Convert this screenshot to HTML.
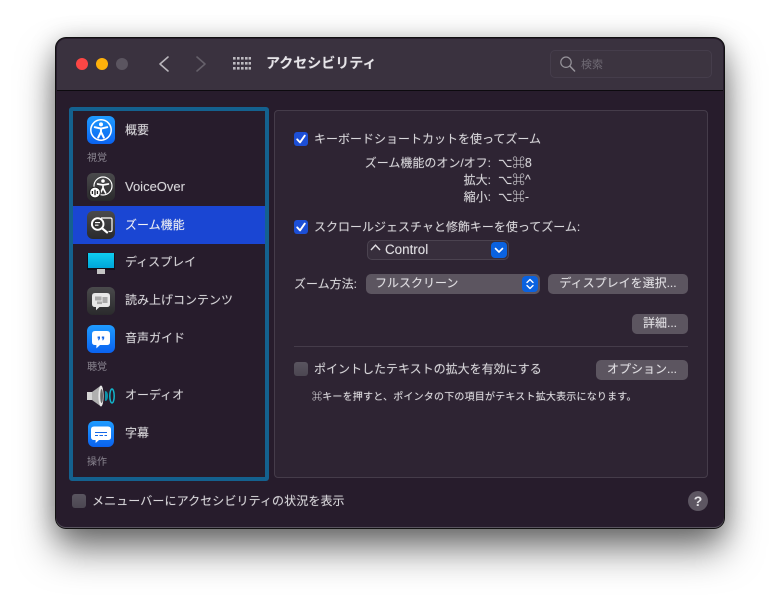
<!DOCTYPE html>
<html lang="ja"><head><meta charset="utf-8">
<style>
html,body{margin:0;padding:0;background:#fff}
body{width:780px;height:602px;position:relative;overflow:hidden;font-family:"Liberation Sans","Noto Sans CJK JP",sans-serif;font-size:12px;color:#d8d6da}
.a{position:absolute}
.t{position:absolute;white-space:nowrap;line-height:16px;height:16px;text-shadow:0 0 1px rgba(216,214,218,.35)}
#win{position:absolute;left:56px;top:38px;width:668px;height:490px;background:#271c2c;border-radius:10px;box-shadow:inset 0 -1px 0 #5a5560,0 0 0 1px #111,0 22px 38px rgba(0,0,0,.5),0 4px 26px rgba(0,0,0,.28);overflow:hidden}
.cb{position:absolute;width:14px;height:14px;border-radius:3px;background:#1c4fd6}
.cb.off{background:linear-gradient(#5a5560,#4c4752)}
.cb svg{position:absolute;left:0;top:0}
.btn{position:absolute;height:20px;line-height:19px;border-radius:5px;background:#5c5560;text-align:center;color:#e2e0e4;white-space:nowrap;text-shadow:0 0 1px rgba(226,224,228,.35)}
.ic{position:absolute;left:87px;width:28px;height:28px;border-radius:6px}
.blue{background:linear-gradient(#1f9bff,#0a62f0)}
.dark{background:linear-gradient(#4a4a4c,#2a2a2c)}
.ic svg{position:absolute;left:0;top:0}
.sec{position:absolute;left:87px;font-size:10px;color:#8a8590;line-height:14px}
</style></head><body>
<div id="win"></div>
<div class="a" style="left:57px;top:39px;width:666px;height:51px;background:#3a323f;border-radius:9px 9px 0 0"></div>
<div class="a" style="left:57px;top:90px;width:666px;height:1px;background:#0c0a0e"></div>

<div class="a" style="left:76px;top:58px;width:12px;height:12px;border-radius:50%;background:#fc4645"></div>
<div class="a" style="left:96px;top:58px;width:12px;height:12px;border-radius:50%;background:#fdb10b"></div>
<div class="a" style="left:116px;top:58px;width:12px;height:12px;border-radius:50%;background:#5b5560"></div>

<svg class="a" style="left:155px;top:54px" width="56" height="20" fill="none" stroke-width="1.6" stroke-linecap="round" stroke-linejoin="round"><path d="M13 3 L5 10 L13 17" stroke="#b9b6bc"/><path d="M42 3 L50 10 L42 17" stroke="#65606a"/></svg>
<svg class="a" style="left:233px;top:57px" width="18" height="14" fill="#bdbac0"><rect x="0" y="0" width="2.6" height="2.6"/><rect x="4" y="0" width="2.6" height="2.6"/><rect x="8" y="0" width="2.6" height="2.6"/><rect x="12" y="0" width="2.6" height="2.6"/><rect x="15.6" y="0" width="2.4" height="2.6"/><rect x="0" y="5" width="2.6" height="2.6"/><rect x="4" y="5" width="2.6" height="2.6"/><rect x="8" y="5" width="2.6" height="2.6"/><rect x="12" y="5" width="2.6" height="2.6"/><rect x="15.6" y="5" width="2.4" height="2.6"/><rect x="0" y="10" width="2.6" height="2.6"/><rect x="4" y="10" width="2.6" height="2.6"/><rect x="8" y="10" width="2.6" height="2.6"/><rect x="12" y="10" width="2.6" height="2.6"/><rect x="15.6" y="10" width="2.4" height="2.6"/></svg>
<div class="t" style="left:266px;top:54px;font-size:14px;font-weight:700;color:#e6e4e8;line-height:18px;height:18px;letter-spacing:0">アクセシビリティ</div>

<div class="a" style="left:550px;top:50px;width:160px;height:26px;border:1px solid #453d4b;border-radius:5px;background:#3c3440"></div>
<svg class="a" style="left:560px;top:56px" width="16" height="17" fill="none" stroke="#96939a" stroke-width="1.2"><circle cx="6" cy="6.2" r="5.2"/><path d="M9.8 10 L14.6 15" stroke-width="1.5" stroke-linecap="round"/></svg>
<div class="t" style="left:581px;top:57px;font-size:11px;color:#6f6a74;text-shadow:none">検索</div>

<!-- sidebar -->
<div class="a" style="left:69px;top:107px;width:192px;height:366px;border:4px solid #14618f;border-radius:3px"></div>
<div class="a" style="left:73px;top:206px;width:192px;height:38px;background:#1a46d3"></div>

<div class="ic blue" style="top:116px"><svg width="28" height="28" fill="none" stroke="#fff"><circle cx="14" cy="14" r="10.2" stroke-width="1.5"/><circle cx="14" cy="8.4" r="2" fill="#fff" stroke="none"/><path d="M7.8 11.2 L14 12.6 L20.2 11.2 M14 12.6 V16 M14 16 L11.2 21.6 M14 16 L16.8 21.6" stroke-width="2" stroke-linecap="round"/></svg></div>
<div class="t" style="left:125px;top:122px">概要</div>
<div class="sec" style="top:151px;margin-top:1px">視覚</div>

<div class="ic dark" style="top:173px"><svg width="28" height="28" fill="none" stroke="#fff"><circle cx="16" cy="13" r="9" stroke-width="1.2"/><circle cx="16" cy="8" r="1.8" fill="#fff" stroke="none"/><path d="M10.6 11 L16 12 L21.4 11 M16 12 V15 M16 15 L13.4 20 M16 15 L18.6 20" stroke-width="1.7" stroke-linecap="round"/><circle cx="8" cy="19.5" r="5.4" fill="#fff" stroke="#222" stroke-width="1"/><path d="M5.4 18 V21 M8 16.8 V22.2 M10.4 18 V21" stroke="#222" stroke-width="1.3"/></svg></div>
<div class="t" style="left:125px;top:179px;font-size:13px">VoiceOver</div>

<div class="ic dark" style="top:211px"><svg width="28" height="28" fill="none" stroke="#fff"><path d="M14 7 H23.5 Q25 7 25 8.5 V19 Q25 20.5 23.5 20.5 H21.5" stroke-width="1.2"/><circle cx="10.7" cy="13" r="5.8" stroke-width="1.9" fill="#333"/><path d="M8 11.6 H13 M8 14.2 H11.5" stroke-width="1.1"/><path d="M15 17.2 L20 21.4" stroke-width="2.2" stroke-linecap="round"/></svg></div>
<div class="t" style="left:125px;top:217px;color:#f2f2f6">ズーム機能</div>

<div class="a" style="left:88px;top:253px;width:26px;height:15px;background:linear-gradient(#0fcdf0,#00a6da);box-shadow:0 1px 0 1px #14101a"></div>
<div class="a" style="left:97px;top:269px;width:8px;height:5px;background:#c4c4c4"></div>
<div class="t" style="left:125px;top:254px">ディスプレイ</div>

<div class="ic dark" style="top:287px"><svg width="28" height="28"><path d="M8 6 H20 Q23 6 23 9 V17 Q23 20 20 20 H12.5 L9 23.2 V20 H8 Q5 20 5 17 V9 Q5 6 8 6Z" fill="#e8e8e8"/><rect x="8" y="9.5" width="6.5" height="4" fill="#a9a9a9"/><rect x="15.5" y="10" width="5" height="6" fill="#a9a9a9"/><rect x="10" y="14.5" width="5" height="2.6" fill="#a9a9a9"/></svg></div>
<div class="t" style="left:125px;top:292px">読み上げコンテンツ</div>

<div class="ic blue" style="top:325px"><svg width="28" height="28"><path d="M8 6 H20 Q23 6 23 9 V17 Q23 20 20 20 H13 L9.4 23.4 V20 H8 Q5 20 5 17 V9 Q5 6 8 6Z" fill="#fff"/><path d="M10.6 11.5 h2.4 v2 l-1 1.8 h-1 l.6 -1.8 h-1Z M14.8 11.5 h2.4 v2 l-1 1.8 h-1 l.6 -1.8 h-1Z" fill="#1467e6"/></svg></div>
<div class="t" style="left:125px;top:330px">音声ガイド</div>
<div class="sec" style="top:361px">聴覚</div>

<svg class="a" style="left:86px;top:384px" width="30" height="24"><path d="M1 8 H6 V16 H1Z" fill="#d4d4d4"/><path d="M6 8 L15 1.5 V22.5 L6 16Z" fill="#b0b0b0"/><ellipse cx="15" cy="12" rx="2.6" ry="10.5" fill="#e8e8e8"/><ellipse cx="15.6" cy="12" rx="1.4" ry="7" fill="#666"/><path d="M19 7 Q22 7 22 12 Q22 17 19 17 Z" fill="#0f93a8"/><ellipse cx="26" cy="12" rx="2.2" ry="7" fill="none" stroke="#11b6cc" stroke-width="1.5"/></svg>
<div class="t" style="left:125px;top:387px">オーディオ</div>

<div class="ic blue" style="left:88px;top:421px;width:26px;height:26px"><svg width="26" height="26"><path d="M6 5.5 H20 Q23 5.5 23 8.5 V16 Q23 19 20 19 H11 L7.6 22 V19 H6 Q3 19 3 16 V8.5 Q3 5.5 6 5.5Z" fill="#fff"/><path d="M7 11.5 H19 M7 14.5 H10 M11.5 14.5 H15 M16.5 14.5 H19" stroke="#1467e6" stroke-width="1"/></svg></div>
<div class="t" style="left:125px;top:425px">字幕</div>
<div class="sec" style="top:456px">操作</div>

<!-- panel -->
<div class="a" style="left:274px;top:110px;width:432px;height:366px;background:#2e2433;border:1px solid #453c4a;border-radius:4px"></div>

<div class="cb" style="left:294px;top:132px"><svg width="14" height="14" fill="none"><path d="M3.2 7.4 L6 10.4 L10.8 3.6" stroke="#fff" stroke-width="1.9" stroke-linecap="round" stroke-linejoin="round"/></svg></div>
<div class="t" style="left:314px;top:131px">キーボードショートカットを使ってズーム</div>
<div class="t" style="right:289px;top:155px">ズーム機能のオン/オフ:</div>
<div class="t" style="left:498px;top:155px;font-size:12.5px">⌥⌘8</div>
<div class="t" style="right:289px;top:172px">拡大:</div>
<div class="t" style="left:498px;top:172px;font-size:12.5px">⌥⌘^</div>
<div class="t" style="right:289px;top:189px">縮小:</div>
<div class="t" style="left:498px;top:189px;font-size:12.5px">⌥⌘-</div>

<div class="cb" style="left:294px;top:220px"><svg width="14" height="14" fill="none"><path d="M3.2 7.4 L6 10.4 L10.8 3.6" stroke="#fff" stroke-width="1.9" stroke-linecap="round" stroke-linejoin="round"/></svg></div>
<div class="t" style="left:314px;top:219px">スクロールジェスチャと修飾キーを使ってズーム:</div>

<div class="a" style="left:367px;top:240px;width:140px;height:18px;background:#372e3c;border:1px solid #4b4350;border-radius:5px"></div>
<svg class="a" style="left:370px;top:244px" width="11" height="7" fill="none"><path d="M1 6 L5.5 1.2 L10 6" stroke="#e2e0e4" stroke-width="1.4"/></svg>
<div class="t" style="left:385px;top:242px;font-size:13.4px;color:#e2e0e4">Control</div>
<div class="a" style="left:491px;top:242px;width:16px;height:16px;border-radius:4px;background:#0a62e0"></div>
<svg class="a" style="left:491px;top:242px" width="16" height="16" fill="none"><path d="M4.5 6.5 L8 10 L11.5 6.5" stroke="#fff" stroke-width="1.6" stroke-linecap="round" stroke-linejoin="round"/></svg>

<div class="t" style="left:294px;top:276px">ズーム方法:</div>
<div class="btn" style="left:366px;top:274px;width:174px;text-align:left;padding:0"><span style="margin-left:9px">フルスクリーン</span></div>
<div class="a" style="left:522px;top:276px;width:16px;height:16px;border-radius:4px;background:#0a62e0"></div>
<svg class="a" style="left:522px;top:276px" width="16" height="16" fill="none"><path d="M5 6.5 L8 3.5 L11 6.5 M5 9.5 L8 12.5 L11 9.5" stroke="#fff" stroke-width="1.4" stroke-linecap="round" stroke-linejoin="round"/></svg>
<div class="btn" style="left:548px;top:274px;width:140px">ディスプレイを選択...</div>
<div class="btn" style="left:632px;top:314px;width:56px">詳細...</div>

<div class="a" style="left:294px;top:346px;width:394px;height:1px;background:#453c4a"></div>

<div class="cb off" style="left:294px;top:362px"></div>
<div class="t" style="left:314px;top:361px">ポイントしたテキストの拡大を有効にする</div>
<div class="btn" style="left:596px;top:360px;width:92px">オプション...</div>
<div class="t" style="left:312px;top:390px;font-size:10px;letter-spacing:.2px;color:#e0dee2">⌘キーを押すと、ポインタの下の項目がテキスト拡大表示になります。</div>

<div class="cb off" style="left:72px;top:494px"></div>
<div class="t" style="left:92px;top:493px;letter-spacing:.1px">メニューバーにアクセシビリティの状況を表示</div>
<div class="a" style="left:688px;top:491px;width:20px;height:20px;border-radius:50%;background:#5d5662;color:#e6e4e8;text-align:center;line-height:20px;font-size:14px;font-weight:700">?</div>
</body></html>
